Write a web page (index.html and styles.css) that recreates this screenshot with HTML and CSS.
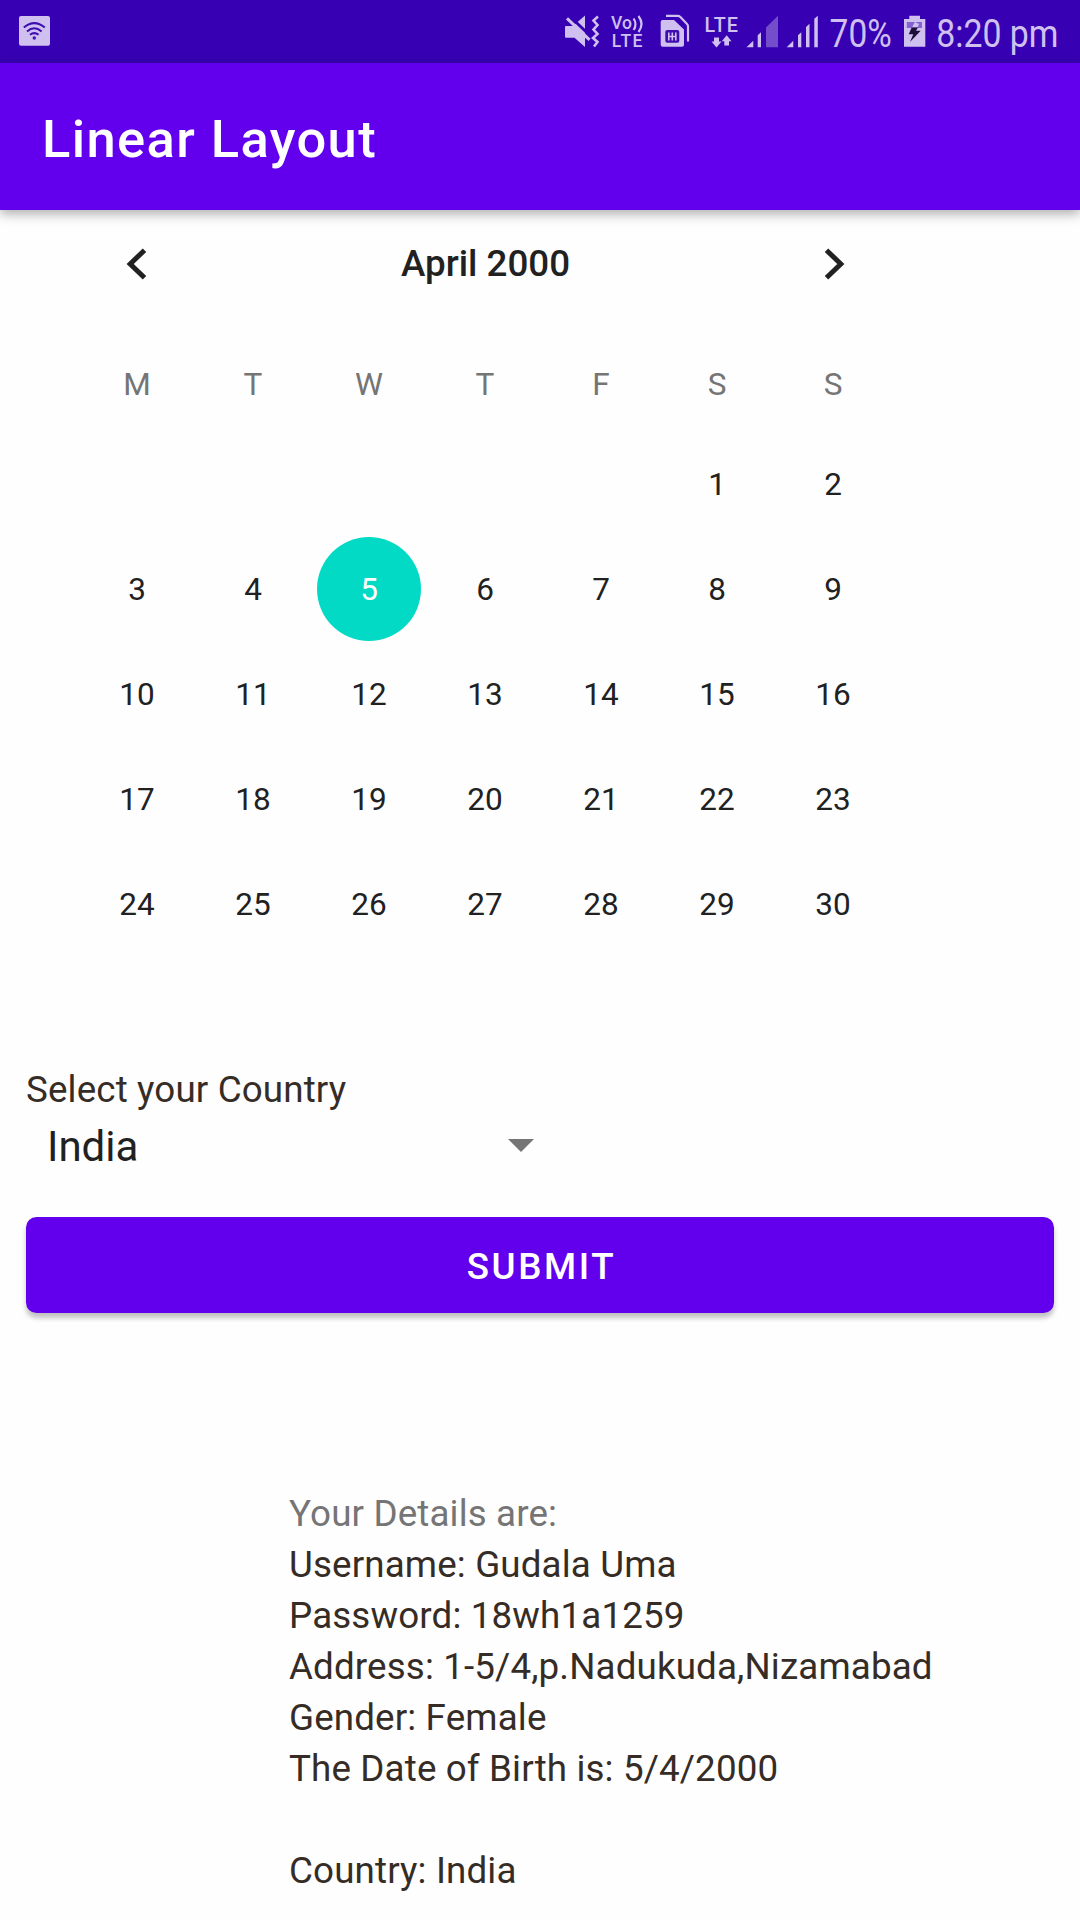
FILE: index.html
```html
<!DOCTYPE html>
<html lang="en">
<head>
<meta charset="utf-8">
<title>Linear Layout</title>
<link rel="stylesheet" href="styles.css">
</head>
<body>
<div class="status-bar">
  <svg class="status-icon" width="32" height="63" viewBox="19 0 32 63">
    <rect x="19" y="16" width="31" height="29.7" rx="2"/>
    <g class="cut">
      <path d="M23.8 27.6Q34.3 18.6 44.8 27.6M27 31.4Q34.3 25.2 41.6 31.4M30 34.8Q34.3 31.4 38.6 34.8"/>
      <circle cx="34.3" cy="38" r="0.7"/>
    </g>
  </svg>
  <div class="status-right">
    <svg class="status-icon" width="46" height="63" viewBox="560 0 46 63">
      <path d="M565 27Q565 26 566 26H573L585 15.5V47L574.5 37.8H566Q565 37.8 565 36.8Z"/>
      <path class="gap" d="M568 14.5L592.5 38"/>
      <path class="slash" d="M567 18.3L589.5 39.8"/>
      <path class="wave" d="M598 16.5L593.5 20.5L597.5 25L593.5 29.5L597.5 34L593 38L597.5 42L594 46.5"/>
    </svg>
    <svg class="status-icon" width="44" height="63" viewBox="606 0 44 63">
      <text x="611" y="29.3" font-size="17.5" textLength="21">Vo</text>
      <path class="thin" d="M633.6 18.5Q637.4 24.3 633.6 30M638.5 16Q644.5 24 638.5 32"/>
      <text x="611.8" y="46.8" font-size="17.5" textLength="30.5">LTE</text>
    </svg>
    <svg class="status-icon" width="50" height="63" viewBox="650 0 50 63">
      <path class="thin" d="M666 15.9H677.5Q679.2 15.9 680.4 17L687 24Q688 25 688 26.5V41.5"/>
      <path d="M662.5 20H674L684 29.6V44.7Q684 46.7 682 46.7H662.7Q660.7 46.7 660.7 44.7V22Q660.7 20 662.5 20Z"/>
      <rect class="chip" x="665.3" y="30" width="14" height="12.8" rx="2"/>
      <path class="contacts" d="M668.8 32.4V40.6M672.3 32.4V40.6M675.8 32.4V40.6M668.8 36.5H675.8"/>
    </svg>
    <svg class="status-icon" width="42" height="63" viewBox="700 0 42 63">
      <text x="704.5" y="31.8" font-size="19.8" textLength="33.5">LTE</text>
      <path d="M714 37.5H719V41.5H721.5L716.5 47.5L711.5 41.5H714ZM724.3 45.5H729V41.3H731.5L726.7 35.3L721.8 41.3H724.3Z"/>
    </svg>
    <svg class="status-icon" width="40" height="63" viewBox="742 0 40 63">
      <path d="M746.5 47.3L753.3 40.7V47.3ZM757.7 47.3V35.2L761 32.3V47.3Z"/>
      <path opacity="0.4" d="M766 47.3V27.5L778 15.8V47.3Z"/>
    </svg>
    <svg class="status-icon" width="42" height="63" viewBox="782 0 42 63">
      <path d="M786.7 47.3L793.3 40.7V47.3ZM798 47.3V35.2L801.3 32.3V47.3ZM806 47.3V26.9L809.5 23.8V47.3ZM814.3 47.3V18.8L817.8 15.8V47.3Z"/>
    </svg>
    <svg class="status-icon" width="74" height="63" viewBox="824 0 74 63">
      <text class="condensed" transform="translate(829.6 46.5) scale(.88 1)" font-size="38">70%</text>
    </svg>
    <svg class="status-icon" width="32" height="63" viewBox="898 0 32 63">
      <path d="M909.3 19V15.7H920V19H925.3V46.7H904V19Z"/>
      <rect class="drained" x="906.8" y="22" width="15.2" height="6"/>
      <path d="M914.8 22L912 27.5H917.5L919 24Z"/>
      <path class="bolt" d="M911.7 27.5H918L916 30.7H920.7L910 42L913.3 34.3H908.7Z"/>
    </svg>
    <svg class="status-icon" width="130" height="63" viewBox="930 0 130 63">
      <text class="condensed" transform="translate(936.2 46.5) scale(.89 1)" font-size="38">8:20 pm</text>
    </svg>
  </div>
</div>
<header class="app-bar"><h1 class="title">Linear Layout</h1></header>

<main>
  <section class="calendar">
    <div class="month-row">
      <svg class="chevron" width="22" height="32" viewBox="0 0 22 32"><path d="M18.5 2.2L4.2 16L18.5 29.8"/></svg>
      <span class="month">April 2000</span>
      <svg class="chevron" width="22" height="32" viewBox="0 0 22 32"><path d="M3.5 2.2L17.8 16L3.5 29.8"/></svg>
    </div>
    <div class="week weekdays"><span>M</span><span>T</span><span>W</span><span>T</span><span>F</span><span>S</span><span>S</span></div>
    <div class="week"><span></span><span></span><span></span><span></span><span></span><span>1</span><span>2</span></div>
    <div class="week"><span>3</span><span>4</span><span class="selected">5</span><span>6</span><span>7</span><span>8</span><span>9</span></div>
    <div class="week"><span>10</span><span>11</span><span>12</span><span>13</span><span>14</span><span>15</span><span>16</span></div>
    <div class="week"><span>17</span><span>18</span><span>19</span><span>20</span><span>21</span><span>22</span><span>23</span></div>
    <div class="week"><span>24</span><span>25</span><span>26</span><span>27</span><span>28</span><span>29</span><span>30</span></div>
  </section>

  <section class="form">
    <div class="label">Select your Country</div>
    <div class="spinner">
      <span>India</span>
      <svg class="caret" width="26" height="13" viewBox="0 0 26 13"><path d="M0 0H26L13 13Z"/></svg>
    </div>
    <button class="submit">SUBMIT</button>
  </section>

  <section class="details">
    <p class="hint">Your Details are:</p>
    <p>Username: Gudala Uma</p>
    <p>Password: 18wh1a1259</p>
    <p>Address: 1-5/4,p.Nadukuda,Nizamabad</p>
    <p>Gender: Female</p>
    <p>The Date of Birth is: 5/4/2000</p>
    <p class="country">Country: India</p>
  </section>
</main>
</body>
</html>
```
FILE: styles.css
```css
* {
  box-sizing: border-box;
}

body {
  margin: 0;
  height: 1920px;
  overflow: hidden;
  background: #fefefe;
  color: #212121;
  font-family: Roboto, "Liberation Sans", sans-serif;
}

.status-bar {
  display: flex;
  justify-content: space-between;
  height: 63px;
  padding: 0 20px 0 19px;
  background: #3700b3;
}

.status-right {
  display: flex;
}

.status-icon {
  display: block;
  flex: none;
  fill: #cfc0f0;
  font-weight: 500;
}

.status-icon .condensed {
  font-weight: 400;
}

.cut {
  fill: none;
  stroke: #3f0cb0;
  stroke-width: 2;
}

.chip {
  fill: #3f0cb0;
}

.contacts {
  stroke: #cfc0f0;
  stroke-width: 1.6;
}

.gap {
  stroke: #3700b3;
  stroke-width: 3;
}

.slash {
  stroke: #cfc0f0;
  stroke-width: 3;
}

.wave {
  fill: none;
  stroke: #cfc0f0;
  stroke-width: 2.6;
}

.thin {
  fill: none;
  stroke: #cfc0f0;
  stroke-width: 2.2;
}

.drained {
  fill: #8662d1;
}

.bolt {
  fill: #1c1038;
}

.app-bar {
  position: relative;
  display: flex;
  align-items: center;
  height: 147px;
  padding: 4px 42px 0;
  background: #6200ee;
  box-shadow: 0 4px 11px rgba(0, 0, 0, 0.32);
}

.title {
  margin: 0;
  color: #fff;
  font-size: 52.5px;
  font-weight: 500;
  letter-spacing: 1.38px;
}

.calendar {
  width: 812px;
  margin-left: 79px;
}

.month-row {
  display: flex;
  align-items: center;
  justify-content: space-between;
  height: 106px;
  margin-bottom: 21px;
  padding: 1px 46px 0 47px;
}

.month {
  font-size: 36.75px;
  font-weight: 500;
}

.chevron {
  fill: none;
  stroke: #212121;
  stroke-width: 5;
}

.week {
  display: grid;
  grid-template-columns: repeat(7, 1fr);
  place-items: center;
  height: 105px;
  padding-top: 1px;
  font-size: 31.5px;
}

.weekdays {
  height: 94px;
  padding-top: 0;
  color: #757575;
}

.selected {
  display: flex;
  align-items: center;
  justify-content: center;
  width: 104px;
  height: 104px;
  border-radius: 50%;
  background: #03dac5;
  color: #fff;
}

.form {
  padding: 109px 26px 0;
}

.label {
  color: #362c26;
  font-size: 36.75px;
  letter-spacing: 0.14px;
  line-height: 50px;
}

.spinner {
  display: flex;
  align-items: center;
  justify-content: space-between;
  width: 508px;
  height: 63px;
  padding-left: 21px;
  font-size: 42px;
}

.caret {
  margin-bottom: 2px;
  fill: #757575;
}

.submit {
  display: block;
  width: 100%;
  height: 96px;
  margin-top: 39px;
  padding: 3px 0 0 3px;
  border: 0;
  border-radius: 10.5px;
  background: #6200ee;
  box-shadow: 0 5px 5px rgba(0, 0, 0, 0.24);
  color: #fff;
  font: 500 36.75px Roboto, "Liberation Sans", sans-serif;
  letter-spacing: 2.6px;
}

.details {
  margin: 175px 0 0 289px;
  color: #362c26;
  font-size: 36.75px;
  letter-spacing: 0.14px;
  line-height: 51px;
}

.details p {
  margin: 0;
}

.details .hint {
  color: #757575;
}

.details .country {
  margin-top: 51px;
}
```
